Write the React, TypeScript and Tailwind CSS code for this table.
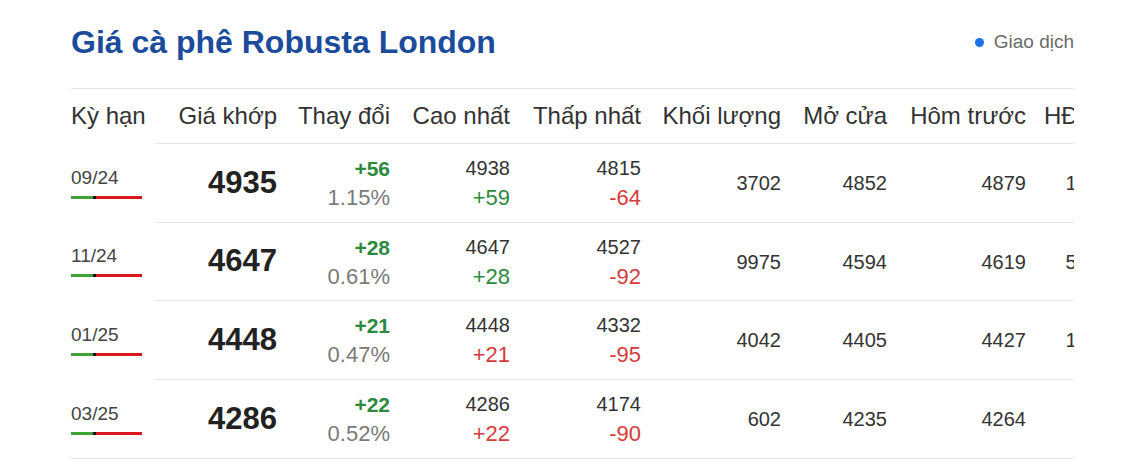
import React from "react";

type Row = {
  term: string;
  price: string;
  change: string;
  pct: string;
  high: string;
  highChg: string;
  highUp: boolean;
  low: string;
  lowChg: string;
  volume: string;
  open: string;
  prev: string;
  oi: string;
};

const rows: Row[] = [
  { term: "09/24", price: "4935", change: "+56", pct: "1.15%", high: "4938", highChg: "+59", highUp: true, low: "4815", lowChg: "-64", volume: "3702", open: "4852", prev: "4879", oi: "12458" },
  { term: "11/24", price: "4647", change: "+28", pct: "0.61%", high: "4647", highChg: "+28", highUp: true, low: "4527", lowChg: "-92", volume: "9975", open: "4594", prev: "4619", oi: "57912" },
  { term: "01/25", price: "4448", change: "+21", pct: "0.47%", high: "4448", highChg: "+21", highUp: false, low: "4332", lowChg: "-95", volume: "4042", open: "4405", prev: "4427", oi: "16237" },
  { term: "03/25", price: "4286", change: "+22", pct: "0.52%", high: "4286", highChg: "+22", highUp: false, low: "4174", lowChg: "-90", volume: "602", open: "4235", prev: "4264", oi: "3512" },
];

const headers = [
  { label: "Giá khớp", w: "w-[122px]" },
  { label: "Thay đổi", w: "w-[113px]" },
  { label: "Cao nhất", w: "w-[120px]" },
  { label: "Thấp nhất", w: "w-[131px]" },
  { label: "Khối lượng", w: "w-[140px]" },
  { label: "Mở cửa", w: "w-[106px]" },
  { label: "Hôm trước", w: "w-[139px]" },
  { label: "HĐ mở", w: "w-[95px]" },
];

function TermBar() {
  return (
    <div className="mt-[7px] flex h-[3px] w-[71px]">
      <div className="w-[22px] bg-[#3ea33a]" />
      <div className="w-[3px] bg-[#111]" />
      <div className="flex-1 bg-[#d9171d]" />
    </div>
  );
}

export default function App() {
  return (
    <div className="h-[459px] w-[1144px] overflow-hidden bg-white font-['Liberation_Sans',Arial,sans-serif]">
      <div className="ml-[71px] w-[1003px] overflow-hidden">
        {/* Title bar */}
        <div className="flex h-[88px] items-center justify-between pb-[4px]">
          <h1 className="text-[32px] font-bold leading-none text-[#1b4b9b]">
            Giá cà phê Robusta London
          </h1>
          <div className="flex items-center text-[19px] text-[#6b6b6b]">
            <span className="mr-[10px] size-[9px] rounded-full bg-[#1a73e8]" />
            Giao dịch
          </div>
        </div>

        {/* Table */}
        <div className="border-y border-[#e3e6ea] text-[#333]">
          <div className="flex h-[54px] w-max items-center text-[24px]">
            <div className="w-[84px] text-left">Kỳ hạn</div>
            {headers.map((h) => (
              <div key={h.label} className={`${h.w} shrink-0 text-right`}>
                {h.label}
              </div>
            ))}
          </div>

          {rows.map((r, i) => (
            <div key={r.term} className={`flex w-max ${i === 1 ? "h-[78px]" : "h-[79px]"}`}>
              <div className="flex w-[84px] flex-col justify-center">
                <div className="text-[19px] leading-[22px] text-[#444]">{r.term}</div>
                <TermBar />
              </div>
              <div className="flex items-center border-t border-[#e3e6ea]">
                <div className="w-[122px] text-right text-[31px] font-bold text-[#222]">{r.price}</div>
                <div className="flex w-[113px] flex-col items-end">
                  <span className="text-[21px] font-bold leading-[29px] text-[#2b8a3e]">{r.change}</span>
                  <span className="text-[22px] leading-[29px] text-[#7a7a7a]">{r.pct}</span>
                </div>
                <div className="flex w-[120px] flex-col items-end">
                  <span className="text-[20px] leading-[29px]">{r.high}</span>
                  <span
                    className={`text-[22px] leading-[29px] ${r.highUp ? "text-[#2b8a3e]" : "text-[#d63b3b]"}`}
                  >
                    {r.highChg}
                  </span>
                </div>
                <div className="flex w-[131px] flex-col items-end">
                  <span className="text-[20px] leading-[29px]">{r.low}</span>
                  <span className="text-[22px] leading-[29px] text-[#d63b3b]">{r.lowChg}</span>
                </div>
                <div className="w-[140px] text-right text-[20px]">{r.volume}</div>
                <div className="w-[106px] text-right text-[20px]">{r.open}</div>
                <div className="w-[139px] text-right text-[20px]">{r.prev}</div>
                <div className="w-[95px] text-right text-[20px]">{r.oi}</div>
              </div>
            </div>
          ))}
        </div>
      </div>
    </div>
  );
}
